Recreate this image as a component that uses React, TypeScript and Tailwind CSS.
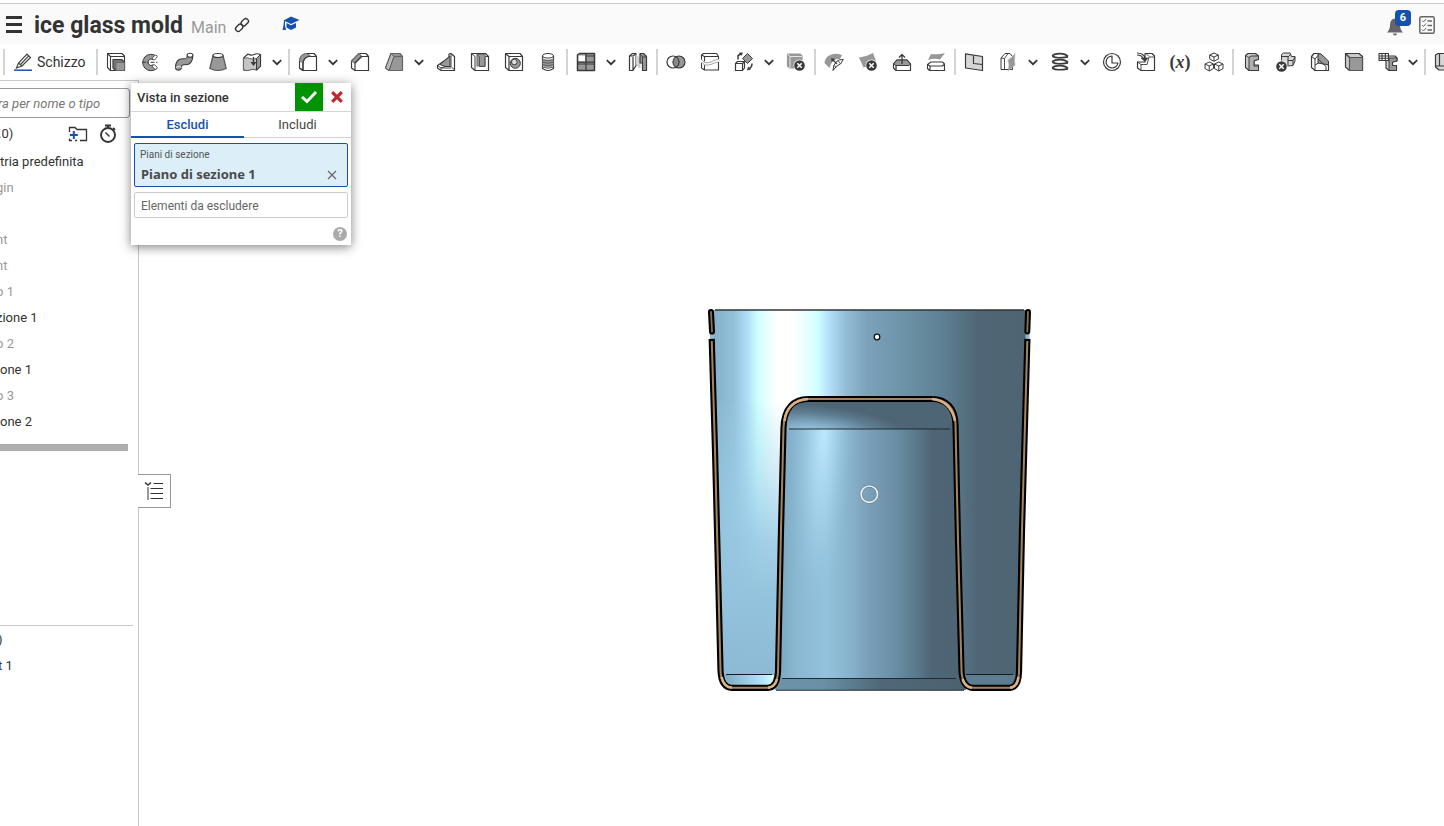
import React, { useState } from "react";

const D = "#3a3a3a";
const G = "#989898";
const L = "#d6d6d6";

function Icon({ children }: { children: React.ReactNode }) {
  return (
    <svg
      viewBox="0 0 20 20"
      className="size-5 shrink-0"
      fill="none"
      stroke={D}
      strokeWidth="1.2"
      strokeLinejoin="round"
      aria-hidden="true"
    >
      {children}
    </svg>
  );
}

function DeleteMark({ x, y }: { x: number; y: number }) {
  return (
    <g>
      <circle cx={x} cy={y} r="5.900" fill="#fff" stroke="none" />
      <circle cx={x} cy={y} r="5.300" fill={D} stroke="none" />
      <path d={`M${x - 2.2} ${y - 2.2}l4.4 4.4M${x + 2.2} ${y - 2.2}l-4.4 4.4`} stroke="#fff" strokeWidth="1.5" />
    </g>
  );
}

const icons: Record<string, React.ReactNode> = {
  Estrudi: (
    <>
      <path d="M1.500 1.500H16L18.500 4V18.500H4.500L1.500 15.500zM1.500 1.500L4.500 4.500V18M4.500 4.500H18" strokeWidth="1.1" />
      <path d="M7 7.500h8.500l3 2.500v8.500H10L7 16z" fill="#777" />
      <path d="M10 10.500h8.500v8H10z" fill={G} stroke="#666" strokeWidth="0.8" />
    </>
  ),
  Rivoluzione: (
    <>
      <path d="M16.500 4.500A8.200 8.200 0 1 0 16.500 16.500L12.800 13A3.200 3.200 0 1 1 12.800 7.500z" fill={G} strokeWidth="1" />
      <ellipse cx="14.800" cy="5.500" rx="1.600" ry="2.900" transform="rotate(45 14.800 5.500)" fill="#fff" strokeWidth="0.8" />
      <ellipse cx="14.800" cy="15" rx="1.600" ry="2.900" transform="rotate(-45 14.800 15)" fill="#fff" strokeWidth="0.8" />
      <path d="M2 10.200h17" strokeDasharray="4 1.500 1.500 1.500" strokeWidth="1.100" />
    </>
  ),
  Sweep: (
    <>
      <path d="M13.500 3.500C13 6 12.500 7 9.500 6.800C4 6.500 1.500 9.500 1.500 16C2 19 6.500 19 7.500 16C7.500 13 8.500 12.500 11 12.800C16 13 18.500 10 18.800 4z" fill={G} strokeWidth="1.100" />
      <ellipse cx="16" cy="3.200" rx="2.900" ry="2" fill="#fff" strokeWidth="1.100" />
      <path d="M1.800 16c1-2 5-2 5.700 0" stroke="#fff" strokeWidth="0.900" />
    </>
  ),
  Loft: (
    <>
      <path d="M5 3.500L1.800 16.500Q10 20.500 18.200 16.500L15 3.500z" fill={G} stroke="#555" />
      <ellipse cx="10" cy="3.500" rx="5" ry="2" fill="#fff" />
    </>
  ),
  Addensa: (
    <>
      <path d="M1.500 6L6 2Q9 4 12 2.500T18.500 2.500V14L14.500 18Q11 16 8 17.500T1.500 18z" fill="#fff" />
      <path d="M1.500 6.500Q5 5 8 6.500T14.500 6.500V18Q11 16.500 8 18T1.500 17.500z" fill="#c4c4c4" stroke="#666" strokeWidth="1" />
      <path d="M14.500 6.500L18.500 2.500V14L14.500 18z" fill={G} strokeWidth="1" />
      <path d="M11.500 5v6" strokeWidth="1.400" />
      <path d="M8.500 10h6l-3 4z" fill={D} stroke="none" />
    </>
  ),
  Raccordo: (
    <>
      <path d="M1.500 16V9Q2 2 9 1.500L12 4Q6 5 5 11V18.500z" fill="#fff" strokeWidth="1.100" />
      <path d="M1.500 9Q2 2 9 1.500L12 4Q6 5 5 11z" fill={G} stroke="#777" strokeWidth="0.900" />
      <path d="M5 18.500V11Q6 4.500 11.500 4.500H18.500V18.500zM1.500 16L5 18.500M9 1.500H16L18.500 4.500" />
    </>
  ),
  Smusso: (
    <>
      <path d="M1.500 16V9L9 1.500H16L18.500 4.500V18.500H5L1.500 16z" />
      <path d="M1.500 9L9 1.500L11.500 4.500L5 11z" fill={G} stroke="#777" />
      <path d="M5 18V11L11.500 4.500H18" />
    </>
  ),
  Sformo: (
    <>
      <path d="M1.500 16L7 1.500H16L18.500 4.500V18.500H5z" fill={G} stroke="#666" />
      <path d="M1.500 16L7 1.500L10 4.500L5 18.500z" fill="#bbb" stroke="#555" strokeWidth="1" />
      <path d="M10 4.500H18" stroke="#666" />
    </>
  ),
  Nervatura: (
    <>
      <path d="M1.500 13.500L13 5.500V2L15 1.500L18.500 4.500V18.500H5L1.500 16z" fill="#fff" />
      <path d="M4 12.500L14 4V14.500H9z" fill={G} strokeWidth="1" />
      <path d="M15 2V14.500L18.500 18M5 18.500V16L9 14.500H15M1.500 13.500L5 16H15" strokeWidth="0.900" />
    </>
  ),
  Svuota: (
    <>
      <path d="M1.500 1.500H15.500L18.500 4.500V18.500H5L1.500 15.500z" />
      <path d="M1.500 1.500L5 4.500V18.500M15 4.500H18.500" strokeWidth="1" />
      <path d="M7 2.500H15V14H7z" fill={G} stroke="#777" />
      <path d="M7 2.500L9.500 5V14.500H15V5" stroke="#555" strokeWidth="1" />
    </>
  ),
  Foro: (
    <>
      <path d="M1.500 1.500H16L18.500 4.500V18.500H5L1.500 15.500zM1.500 1.500L5 4.500V18M5 4.500H18" />
      <circle cx="11.300" cy="11.300" r="5" fill={G} strokeWidth="1" />
      <circle cx="10.300" cy="10" r="2.800" fill="#ddd" strokeWidth="0.900" />
    </>
  ),
  Filettatura: (
    <>
      <path d="M4.500 4v12.500Q10 20.500 15.500 16.500V4z" fill="#fff" />
      <path d="M4.500 6.500Q10 9 15.500 6.500V14Q10 17.500 4.500 14z" fill={G} stroke="none" />
      <ellipse cx="10" cy="3.800" rx="5.500" ry="2.300" fill="#fff" strokeWidth="1" />
      <path d="M4 7.500q6 2.500 12 0M4 10q6 2.500 12 0M4 12.500q6 2.500 12 0M4 15q6 2.500 12 0" stroke="#555" strokeWidth="0.900" />
    </>
  ),
  "Ripetizione lineare": (
    <>
      <path d="M1.500 3L3.500 1.500H18.500V18.500H1.500z" fill={G} strokeWidth="1.500" />
      <path d="M2.500 3.500H9V9.500H2.500z" fill="#fff" stroke="none" />
      <path d="M10 1.500V18.500M1.500 10.200H18.500M10 4H18M2 12H18" strokeWidth="1.200" />
    </>
  ),
  Specchio: (
    <>
      <path d="M1.500 4L4.500 1.500H8V13.500L5 18.500H1.500zM5 5V18M1.500 4H5L8 1.500" fill="#fff" />
      <path d="M8 2.500L12 7V16L8 12z" fill={L} stroke="#bbb" strokeWidth="0.700" />
      <path d="M12 1.500H15.500L18.500 4.500V18.500H14.500V11H12z" fill={G} />
      <path d="M14.500 12V5L12 2M14.500 5h4" strokeWidth="0.900" />
    </>
  ),
  Booleano: (
    <>
      <circle cx="13" cy="10" r="6" fill={G} />
      <circle cx="7" cy="10" r="6" fill="#fff" fillOpacity="0.350" />
      <path d="M10 4.800A6 6 0 0 1 10 15.200A6 6 0 0 1 10 4.800z" fill="#888" strokeWidth="0.900" />
    </>
  ),
  Dividi: (
    <>
      <path d="M1.500 16V3L3.500 1.500H16.500L18.500 4.500V18H4.500L1.500 16M1.500 3L4.500 4.500H18.500M4.500 4.500V18" strokeWidth="1.100" />
      <path d="M1 8.500L4.500 11.500Q9 12.500 12 10.500T19 8.500" stroke="#fff" strokeWidth="3" />
      <path d="M1.500 7.500L4.500 10.500Q9 11.500 12 9.500T18.500 7.500M1.500 10L4.500 13Q9 13.500 12 12T18.500 10" stroke="#999" strokeWidth="0.900" />
    </>
  ),
  Trasforma: (
    <>
      <path d="M1.500 11.500L3.500 9.500H10.500V16L8.500 18.500H1.500zM1.500 11.500H8.500V18M8.500 11.500L10.500 9.500" />
      <path d="M13.500 1.500L18.500 6.500L13.500 11.500L8.500 6.500z" fill={G} strokeWidth="1" />
      <path d="M4 7.500V3.500L7 2M5.500 1.500H8M18 11.500Q18 15.500 14.500 17" strokeWidth="1.500" />
      <path d="M5 .8L9 .8L7.500 3.800zM13 18.500L14 14.500L16.800 17.500z" fill={D} stroke="none" />
    </>
  ),
  "Elimina parte": (
    <>
      <path d="M1.500 2H14L16 4V16H4L1.500 14z" fill={G} stroke={G} />
      <path d="M1.500 2L4 4.500H16M4 4.500V16" stroke="#eee" strokeWidth="0.900" />
      <DeleteMark x={13.5} y={13.5} />
    </>
  ),
  "Modifica raccordo": (
    <>
      <path d="M.5 11C1 3 10 -.5 18 3L16 7Q8 6 5.500 16z" fill={G} stroke="none" />
      <path d="M9 18.500Q9 13 12 10Q15 7 19.300 7.500L16.500 12Q12.500 13 9 18.500z" fill="#fff" strokeWidth="1" />
      <path d="M14 8.500L16.500 12M10 13.500L12.500 15.200" strokeWidth="0.800" />
      <path d="M13 12L8.500 7.500" strokeWidth="1.300" />
      <path d="M7 6.200L11 6.800L7.800 10z" fill={D} stroke="none" />
    </>
  ),
  "Elimina faccia": (
    <>
      <path d="M1 5.500Q8 5 15 1L18 9Q13 14 5.500 15.500z" fill={G} stroke="none" />
      <DeleteMark x={13.5} y={13.5} />
    </>
  ),
  "Sposta faccia": (
    <>
      <path d="M1.500 12L5 8H15L18.500 12V18.500H4L1.500 16z" fill="#fff" />
      <path d="M1.500 12L5 8H15L18.500 12L17 13.500H4z" fill={G} strokeWidth="1" />
      <path d="M10 12V3M7 5.500L10 2.500L13 5.500M4 13.500V18" strokeWidth="1.300" />
    </>
  ),
  "Sostituisci faccia": (
    <>
      <path d="M5 2Q12 3 19 1L14 7.500Q8 6 2 8z" fill={G} stroke="none" />
      <path d="M1.500 12.500L5 10H16.500L18.500 12V18.500H3.500L1.500 16.500zM1.500 12.500L4 14H16.500L18.500 12M4 14V18" strokeWidth="1.100" />
    </>
  ),
  Piano: (
    <>
      <path d="M1.500 1.800L18.500 4.500V18.500L1.500 16z" fill={L} />
      <path d="M9.500 3.500V11.500L18.500 12.500" />
    </>
  ),
  Offset: (
    <>
      <path d="M3 6L7 1.500H12L14.500 4.500V17.500H3z" fill="#fff" strokeWidth="1" />
      <path d="M6.500 6.500V17M3 6L6.500 6.500L10 1.500" strokeWidth="0.900" />
      <path d="M10 8Q14 6 17 1.500Q16 9 17 13L10 19Q12 13 10 8z" fill={G} stroke="#aaa" strokeWidth="0.600" />
    </>
  ),
  Elica: (
    <path
      d="M18 4.500Q15 1 7 1.800Q1.500 2.800 3 4.500Q6 6.800 18 4.800M18 10.500Q15 7 7 7.800Q1.500 8.800 3 10.500Q6 12.800 18 10.800M18 16.500Q15 13 7 13.800Q1.500 14.800 3 16.500Q6 18.800 18 16.800"
      strokeWidth="1.700"
    />
  ),
  "Curva 3D": (
    <>
      <circle cx="10" cy="10" r="8.500" />
      <path d="M10 4A6 6 0 1 0 16 11H10z" fill="#fff" strokeWidth="1.200" />
    </>
  ),
  Deriva: (
    <>
      <path d="M9 1.500H16L18.500 4V18.500H5L1.500 16V10H9z" fill="#fff" />
      <path d="M5 18V12.500H11L13 5H18.500M1.500 10L5 12.500M10 1.500L13 4.500" strokeWidth="0.900" />
      <path d="M1 1Q8 1 9.500 7M1 3Q6 3 7.500 7" strokeWidth="1.100" />
      <path d="M5 6H12L9 9.500z" fill={D} strokeWidth="0.600" />
    </>
  ),
  Contesto: (
    <g fill="#fff" strokeWidth="1">
      <path d="M10 1L14.300 3V7L10 9.300L5.700 7V3zM5.700 3L10 5L14.300 3M10 5V9" />
      <path d="M5.200 10L9.500 12V16.500L5.200 19L1 16.500V12zM1 12L5.200 14L9.500 12M5.200 14V19" />
      <path d="M14.800 10L19 12V16.500L14.800 19L10.500 16.500V12zM10.500 12L14.800 14L19 12M14.800 14V19" />
    </g>
  ),
  Lamiera: (
    <>
      <path d="M3.500 3.500L6 1.500H13.500L16.500 4V7.500L12 8.500V13H16.500V18.500H7L3.500 15.500z" fill="#ccc" strokeWidth="1.100" />
      <path d="M7 5.500L9 4H16.500V7.500L12 8.500V14H16.500V18.500H7z" fill="#b0b0b0" strokeWidth="1" />
      <path d="M3.500 3.500L7 5.500" strokeWidth="0.800" />
    </>
  ),
  Converti: (
    <>
      <path d="M5.500 5V2.500L7.500 1H14L15.500 4.500H19V9L17 13.500L11 14L5.500 9z" fill={L} strokeWidth="1" />
      <path d="M5.500 4.500H12V13M12 5L15 2M12 8.500H17L19 5M17 8.500V13" strokeWidth="1" />
      <DeleteMark x={5.5} y={14.5} />
    </>
  ),
  Flangia: (
    <>
      <path d="M1.500 4.500L4 1.500H8L18.500 13V18.500H5L1.500 15.500z" fill="#fff" />
      <path d="M8 1.500L11 2L18.500 9V13L8 11z" fill={G} strokeWidth="1" />
      <path d="M1.500 4.500L5 7V18M5 7L8 3.500M5 13L8.500 11M8 7L16 14.500V18" strokeWidth="1" />
    </>
  ),
  Solido: (
    <>
      <path d="M1.500 1.500H15L18.500 4.500V18.500H5.500L1.500 15z" fill="#ccc" />
      <path d="M5.500 5.500H18.500V18.500H5.500z" fill={G} stroke="#555" />
      <path d="M1.500 1.500L5.500 5.500" />
    </>
  ),
  Tabella: (
    <>
      <path d="M8 4H17L19 6V9L14.500 10V13.500H18.500V18.500H11L8 16z" fill={L} />
      <path d="M11 6H19V9L14.500 10V13.500H18.500V18.500H11z" fill={G} strokeWidth="1" />
      <path d="M1 1.500H10.500V8.500H1zM1 4H10M1 6.300H10M4 1.500V8.500M7.300 1.500V8.500" fill="#fff" strokeWidth="1.100" />
    </>
  ),
  Finitura: (
    <>
      <path d="M1.500 3L4 1.500H16V18H5L1.500 15z" fill={L} />
      <path d="M5.500 2V14M1.500 14H16" />
    </>
  ),
};

function Sep() {
  return <div className="mx-px h-[26px] w-0.5 shrink-0 bg-[#d4d4d4]" />;
}

function Tool({ name }: { name: string }) {
  return (
    <button type="button" aria-label={name} className="flex h-7 w-[34px] shrink-0 items-center justify-center">
      {name === "Variabile" ? (
        <span className="font-['Liberation_Serif',serif] text-lg leading-5 font-bold text-[#3a3a3a] italic">
          <span className="not-italic">(</span>x<span className="not-italic">)</span>
        </span>
      ) : (
        <Icon>{icons[name]}</Icon>
      )}
    </button>
  );
}

function Chevron() {
  return (
    <button type="button" aria-label="Altri strumenti" className="flex h-7 w-[18px] shrink-0 items-center justify-center pr-0.5">
      <svg viewBox="0 0 10 7" className="h-[7px] w-2.5" fill="none" stroke="#333" strokeWidth="1.800" aria-hidden="true">
        <path d="M.8 1.200L5 5.200L9.200 1.200" />
      </svg>
    </button>
  );
}

const toolbar = [
  "Estrudi", "Rivoluzione", "Sweep", "Loft", "Addensa", "v", "|",
  "Raccordo", "v", "Smusso", "Sformo", "v", "Nervatura", "Svuota", "Foro", "Filettatura", "|",
  "Ripetizione lineare", "v", "Specchio", "|",
  "Booleano", "Dividi", "Trasforma", "v", "Elimina parte", "|",
  "Modifica raccordo", "Elimina faccia", "Sposta faccia", "Sostituisci faccia", "|",
  "Piano", "Offset", "v", "Elica", "v", "Curva 3D", "Deriva", "Variabile", "Contesto", "|",
  "Lamiera", "Converti", "Flangia", "Solido", "Tabella", "v", "|", "Finitura",
];

const rowStyles = {
  group: "h-[26px] whitespace-nowrap text-[#333]",
  part: "-ml-1 h-[26px] whitespace-nowrap text-[#333]",
  hidden: "-ml-1 h-[26px] whitespace-nowrap text-[#999]",
};

const features: { label: string; kind: keyof typeof rowStyles }[] = [
  { label: "tria predefinita", kind: "group" },
  { label: "gin", kind: "hidden" },
  { label: "", kind: "hidden" },
  { label: "nt", kind: "hidden" },
  { label: "nt", kind: "hidden" },
  { label: "o 1", kind: "hidden" },
  { label: "zione 1", kind: "part" },
  { label: "o 2", kind: "hidden" },
  { label: "one 1", kind: "group" },
  { label: "o 3", kind: "hidden" },
  { label: "one 2", kind: "group" },
];

function Header() {
  return (
    <header className="flex h-[41px] items-center border-t border-[#c9c9c9] bg-[#fafafa] pr-[9px] pl-1.5">
      <button type="button" aria-label="Menu" className="flex w-4 flex-col gap-1">
        <span className="h-[3px] bg-[#333]" />
        <span className="h-[3px] bg-[#333]" />
        <span className="h-[3px] bg-[#333]" />
      </button>
      <h1 className="mt-1 ml-3 text-[23px] leading-9 font-bold text-[#333]">ice glass mold</h1>
      <span className="mt-2 ml-2 text-base text-[#999]">Main</span>
      <button type="button" aria-label="Copia collegamento" className="mt-0.5 ml-2">
        <svg viewBox="0 0 16 16" className="size-4" fill="none" stroke="#333" strokeWidth="1.400" aria-hidden="true">
          <rect x="-4" y="-2.600" width="8" height="5.200" rx="2.600" transform="translate(10.800 5.200) rotate(-45)" />
          <rect x="-4" y="-2.600" width="8" height="5.200" rx="2.600" transform="translate(5.200 10.800) rotate(-45)" />
        </svg>
      </button>
      <button type="button" aria-label="Formazione" className="ml-8">
        <svg viewBox="0 0 18 16" className="h-4 w-[18px]" fill="#1651b0" aria-hidden="true">
          <path d="M9 .5L17.500 4L9 8L1.500 4.500z" />
          <path d="M4.500 7L9 9.300L14 7V11.500L9 14L4.500 11.500z" />
          <path d="M2 4.500L3 5V9.500L4 14H.5L1.500 9.500z" />
        </svg>
      </button>
      <div className="ml-auto flex items-center gap-3">
        <button type="button" aria-label="Notifiche, 6" className="relative mt-1.5 w-[21px]">
          <svg viewBox="0 0 20 20" className="size-5" fill="#666" aria-hidden="true">
            <path d="M9 1.500Q14 2 14 8Q14 13 17 15.500H1Q4 13 4 8Q4 2 9 1.500zM7 16.500H11Q11 18.500 9 18.500T7 16.500z" />
          </svg>
          <span className="absolute -top-[7px] left-[9px] flex h-4 w-4 items-center justify-center rounded-sm bg-[#1651b0] text-[11px] font-bold text-white">
            6
          </span>
        </button>
        <button type="button" aria-label="Attività" className="mt-0.5">
          <svg viewBox="0 0 16 18" className="h-[18px] w-4" fill="none" stroke="#666" strokeWidth="1.500" aria-hidden="true">
            <rect x=".8" y=".8" width="14.400" height="16.400" rx="1.500" />
            <path d="M8.500 5H13M8.500 9.500H13M8.500 14H13" strokeWidth="1.700" />
            <path d="M3 4.500L4.500 6L7 3M3 9L4.500 10.500L7 7.500M3 13.500L4.500 15L7 12" strokeWidth="1" />
          </svg>
        </button>
      </div>
    </header>
  );
}

function FeaturePanel() {
  return (
    <aside className="relative flex w-[139px] shrink-0 flex-col border-t border-r border-[#c9c9c9]">
      <input
        aria-label="Filtra per nome o tipo"
        placeholder="ra per nome o tipo"
        className="mt-[7px] mr-2 -ml-0.5 h-[30px] rounded-r-sm border border-l-0 border-[#999] text-[13px] italic outline-none placeholder:text-[#777]"
      />
      <div className="flex h-[31px] items-center text-[13px] text-[#333]">
        <span className="-ml-0.5">.0)</span>
        <button type="button" aria-label="Nuova cartella" className="ml-auto">
          <svg viewBox="0 0 20 16" className="h-4 w-5" fill="none" stroke="#333" strokeWidth="1.300" aria-hidden="true">
            <path d="M1.500 6V1.500H7L9 3.500H18.500V14.500H12M1.500 12.500V14.500H4M7 14.500H9" />
            <path d="M5.800 5V13M1.800 9H9.800" stroke="#1651b0" strokeWidth="2" />
          </svg>
        </button>
        <button type="button" aria-label="Tempi di rigenerazione" className="mr-[21px] ml-[11px]">
          <svg viewBox="0 0 18 20" className="h-5 w-[18px]" fill="none" stroke="#333" strokeWidth="1.900" aria-hidden="true">
            <circle cx="9" cy="11" r="7" />
            <path d="M6 1.500H12M9 1.500V4M14 4L16 6" />
            <path d="M6.500 8.500L10.500 12.500" strokeWidth="1.500" />
          </svg>
        </button>
      </div>
      <ul className="text-[13px] leading-[26px]">
        {features.map((f, i) => (
          <li key={i} className={rowStyles[f.kind]}>
            {f.label}
          </li>
        ))}
      </ul>
      <div className="mt-[9px] mr-2.5 h-[7px] bg-[#aeaeae]" />
      <section className="mt-[174px] mr-[5px] border-t border-[#c9c9c9] text-[13px] leading-[26px] text-[#333]">
        <p className="-ml-0.5 pt-px">)</p>
        <p className="-ml-0.5">t 1</p>
      </section>
      <button
        type="button"
        aria-label="Mostra elenco"
        className="absolute top-[393px] left-[138px] flex h-[34px] w-[33px] items-center justify-center border border-l-0 border-[#999] bg-white"
      >
        <svg viewBox="0 0 20 20" className="size-5" fill="none" stroke="#333" strokeWidth="1.200" aria-hidden="true">
          <path d="M9.500 2.500H19M6.500 7.500H19M6.500 12.500H19M6.500 17.500H19" />
          <path d="M1 1.500L4 4L7 1.500" strokeWidth="1.500" />
          <path d="M4 6V19" stroke="#999" strokeWidth="2" />
        </svg>
      </button>
    </aside>
  );
}

function SectionDialog() {
  const [tab, setTab] = useState(0);
  const tabClass = (i: number) =>
    tab === i
      ? "h-[26px] w-[113px] border-b-2 border-[#1651b0] pt-px font-medium text-[#1651b0]"
      : "h-[26px] flex-1 border-b border-[#d4d4d4] text-[#444]";
  return (
    <section
      role="dialog"
      aria-label="Vista in sezione"
      className="absolute top-[3px] left-[131px] w-[220px] bg-white text-[13px] shadow-[0_2px_10px_rgba(0,0,0,0.5)]"
    >
      <div className="flex h-[29px] items-stretch border-b border-[#d4d4d4]">
        <h2 className="flex-1 pl-1.5 leading-[29px] font-medium text-[#333]">Vista in sezione</h2>
        <button type="button" aria-label="Conferma" className="flex w-7 items-center justify-center bg-[#009300]">
          <svg viewBox="0 0 18 14" className="h-3.5 w-[18px]" fill="none" stroke="#fff" strokeWidth="3" aria-hidden="true">
            <path d="M2 7L7 11.500L16 2" />
          </svg>
        </button>
        <button type="button" aria-label="Annulla" className="flex w-7 items-center justify-center">
          <svg viewBox="0 0 12 12" className="size-3" fill="none" stroke="#c1272d" strokeWidth="3.200" aria-hidden="true">
            <path d="M1.200 1.200L10.800 10.800M10.800 1.200L1.200 10.800" />
          </svg>
        </button>
      </div>
      <div className="flex" role="tablist">
        <button type="button" role="tab" aria-selected={tab === 0} className={tabClass(0)} onClick={() => setTab(0)}>
          Escludi
        </button>
        <button type="button" role="tab" aria-selected={tab === 1} className={tabClass(1)} onClick={() => setTab(1)}>
          Includi
        </button>
      </div>
      <div className="flex flex-col gap-[5px] px-[3px] pt-[5px]">
        <div className="h-11 rounded-xs border border-[#1651b0] bg-[#dceef8] px-[5px]">
          <div className="pt-1 text-[10px] leading-[14px] text-[#555]">Piani di sezione</div>
          <div className="flex items-center justify-between pr-1 pl-px leading-[25px]">
            <span className="font-['Noto_Sans',sans-serif] text-[13px] font-bold text-[#4a4a4a]">Piano di sezione 1</span>
            <button type="button" aria-label="Rimuovi Piano di sezione 1" className="p-px">
              <svg viewBox="0 0 10 10" className="size-2.5" fill="none" stroke="#666" strokeWidth="1.200" aria-hidden="true">
                <path d="M1 1L9 9M9 1L1 9" />
              </svg>
            </button>
          </div>
        </div>
        <input
          aria-label="Elementi da escludere"
          placeholder="Elementi da escludere"
          className="h-[26px] w-full rounded-xs border border-[#ccc] px-1.5 pt-0.5 text-xs outline-none placeholder:text-[#666]"
        />
      </div>
      <div className="flex h-[27px] items-center justify-end pt-1 pr-1">
        <button
          type="button"
          aria-label="Guida"
          className="flex size-3.5 items-center justify-center rounded-full bg-[#aaa] text-[11px] leading-none font-bold text-white"
        >
          ?
        </button>
      </div>
    </section>
  );
}

const wall =
  "M711.800 342L715 450L720.500 670Q721 687.500 732 687.800H768Q777 687.500 778 672L781 530L783.500 428C784 408 794 399 808 399H932C946 399 955 408 955.500 424L958 540L961.500 670Q962 687.500 973 687.800H1010Q1018.500 687.500 1019 672L1022 530L1027.300 342";

function Model() {
  return (
    <svg viewBox="700 300 340 400" className="mt-[220px] ml-[561px] h-[400px] w-[340px]" role="img" aria-label="Sezione dello stampo">
      <defs>
        <linearGradient id="outer" gradientUnits="userSpaceOnUse" x1="712" x2="1028" y1="0" y2="0">
          <stop offset="0" stopColor="#84aec8" />
          <stop offset="0.070" stopColor="#94c1da" />
          <stop offset="0.110" stopColor="#aedcf4" />
          <stop offset="0.145" stopColor="#ceffff" />
          <stop offset="0.175" stopColor="#e9ffff" />
          <stop offset="0.205" stopColor="#fff" />
          <stop offset="0.255" stopColor="#fff" />
          <stop offset="0.300" stopColor="#e6ffff" />
          <stop offset="0.335" stopColor="#ceffff" />
          <stop offset="0.370" stopColor="#b4e0fa" />
          <stop offset="0.425" stopColor="#92bcd6" />
          <stop offset="0.490" stopColor="#7ba2bb" />
          <stop offset="0.620" stopColor="#6b91a6" />
          <stop offset="0.740" stopColor="#5d7e91" />
          <stop offset="0.840" stopColor="#4f6676" />
          <stop offset="1" stopColor="#4e6473" />
        </linearGradient>
        <linearGradient id="inner" gradientUnits="userSpaceOnUse" x1="779" x2="961" y1="0" y2="0">
          <stop offset="0" stopColor="#7ca7c1" />
          <stop offset="0.100" stopColor="#8ab7d1" />
          <stop offset="0.260" stopColor="#93c2dc" />
          <stop offset="0.400" stopColor="#87b1cb" />
          <stop offset="0.480" stopColor="#7ba1bb" />
          <stop offset="0.650" stopColor="#688da2" />
          <stop offset="0.770" stopColor="#587688" />
          <stop offset="0.840" stopColor="#4e6575" />
          <stop offset="1" stopColor="#4e6473" />
        </linearGradient>
        <linearGradient id="fade" gradientUnits="userSpaceOnUse" x1="790" x2="752" y1="400" y2="680">
          <stop offset="0" stopColor="#9bcfe9" stopOpacity="0" />
          <stop offset="0.250" stopColor="#9bcfe9" stopOpacity="0.400" />
          <stop offset="0.500" stopColor="#98c8e3" stopOpacity="0.850" />
          <stop offset="0.700" stopColor="#94c3dd" />
          <stop offset="1" stopColor="#8cb9d3" />
        </linearGradient>
        <radialGradient id="glow" gradientUnits="userSpaceOnUse" cx="0" cy="0" r="1" gradientTransform="translate(824 429) rotate(3) scale(30 190)">
          <stop offset="0" stopColor="#bde9ff" />
          <stop offset="0.400" stopColor="#b0dcf5" stopOpacity="0.650" />
          <stop offset="1" stopColor="#93c2dc" stopOpacity="0" />
        </radialGradient>
        <radialGradient id="dome" gradientUnits="userSpaceOnUse" cx="0" cy="0" r="1" gradientTransform="translate(814 432) rotate(5) scale(98 27)">
          <stop offset="0" stopColor="#a2d0ea" />
          <stop offset="0.350" stopColor="#7ea7c0" />
          <stop offset="0.700" stopColor="#5d7d91" />
          <stop offset="1" stopColor="#4e6575" />
        </radialGradient>
        <linearGradient id="pocket" x1="0" x2="1" y1="0" y2="0">
          <stop offset="0" stopColor="#7aa8c2" />
          <stop offset="0.800" stopColor="#b7e7ff" />
          <stop offset="1" stopColor="#dff" />
        </linearGradient>
        <linearGradient id="rim" x1="0" x2="1" y1="0" y2="0">
          <stop offset="0" stopColor="#6c93aa" />
          <stop offset="0.250" stopColor="#6a90a6" />
          <stop offset="0.550" stopColor="#4f6878" />
          <stop offset="1" stopColor="#4c6170" />
        </linearGradient>
      </defs>
      <path d="M711 310H1029L1027 345L1019 680L1012 688H728L720 678L712 342z" fill="url(#outer)" />
      <path d="M714 402H790V688H728L720 678z" fill="url(#fade)" />
      <path d="M715 310H1024" stroke="#333" strokeWidth="1.400" />
      <path d="M778 672H962L966 690H775z" fill="url(#rim)" />
      <path d="M786 429H953L962 679H778z" fill="url(#inner)" />
      <path d="M787 429H900V630H780z" fill="url(#glow)" />
      <path d="M786 429C786 408 797 401 810 401H931C945 401 953 410 953 429z" fill="url(#dome)" />
      <path d="M789 429H950M782 678.500H956M776 690.200H964" stroke="#202a30" strokeWidth="1.100" />
      <path d="M724 675H774L773 683L768 686H731z" fill="url(#pocket)" />
      <path d="M964 675H1016L1010 686H971z" fill="#5d7e91" />
      <path d="M726 674.500H772M966 674.500H1013" stroke="#15191b" strokeWidth="1.100" />
      <path d="M712 334V340M1027.500 334V340" stroke="#8fbad0" strokeWidth="4" />
      <g fill="none" strokeLinejoin="round" strokeLinecap="square">
        <path d={wall} stroke="#000" strokeWidth="6.200" />
        <path d={wall} stroke="#a58560" strokeWidth="2" />
        <g strokeLinecap="round">
          <path d="M711 312L712 331.500M1028 312L1027.300 331.500" stroke="#000" strokeWidth="6" />
          <path d="M711 312L712 331.500M1028 312L1027.300 331.500" stroke="#8c704f" strokeWidth="1.800" />
        </g>
        <path d="M784.500 421Q787 401 808 399M932 399Q951 401 955 421M721.500 677Q724 687 732 687.800M1018.500 677Q1017 687 1010 687.800M777 679Q775 687 768 687.800M962.500 679Q965 687 972 687.800" stroke="#dbb084" strokeWidth="2.600" strokeLinecap="butt" />
      </g>
      <circle cx="877" cy="337" r="2.800" fill="#fff" stroke="#111" strokeWidth="1.300" />
      <circle cx="869.300" cy="494.200" r="8.200" fill="none" stroke="#566" strokeOpacity="0.500" strokeWidth="3" />
      <circle cx="869.300" cy="494.200" r="8.200" fill="none" stroke="#eee" strokeWidth="1.700" />
    </svg>
  );
}

export default function App() {
  return (
    <div className="flex min-h-screen flex-col overflow-hidden bg-white pt-[3px] font-[Roboto,sans-serif]">
      <Header />
      <nav aria-label="Strumenti" className="flex h-9 items-center overflow-hidden pl-0.5">
        <Sep />
        <button type="button" className="flex w-[89px] shrink-0 items-center gap-[5px] pl-2 text-sm text-[#333]">
          <svg viewBox="0 0 18 18" className="size-[18px]" fill="none" stroke="#444" strokeWidth="1.200" aria-hidden="true">
            <path d="M2.500 15L4.500 10L13 1.200L16.500 4.500L8 13zM4.500 10L8 13M6.500 11.500L14.500 3.200" />
            <path d="M0 17.200H18" stroke="#1651b0" strokeWidth="1.500" />
          </svg>
          Schizzo
        </button>
        <Sep />
        {toolbar.map((t, i) => (t === "|" ? <Sep key={i} /> : t === "v" ? <Chevron key={i} /> : <Tool key={i} name={t} />))}
      </nav>
      <main className="relative flex grow">
        <FeaturePanel />
        <div className="min-w-0 flex-1 overflow-hidden">
          <Model />
        </div>
        <SectionDialog />
      </main>
    </div>
  );
}
